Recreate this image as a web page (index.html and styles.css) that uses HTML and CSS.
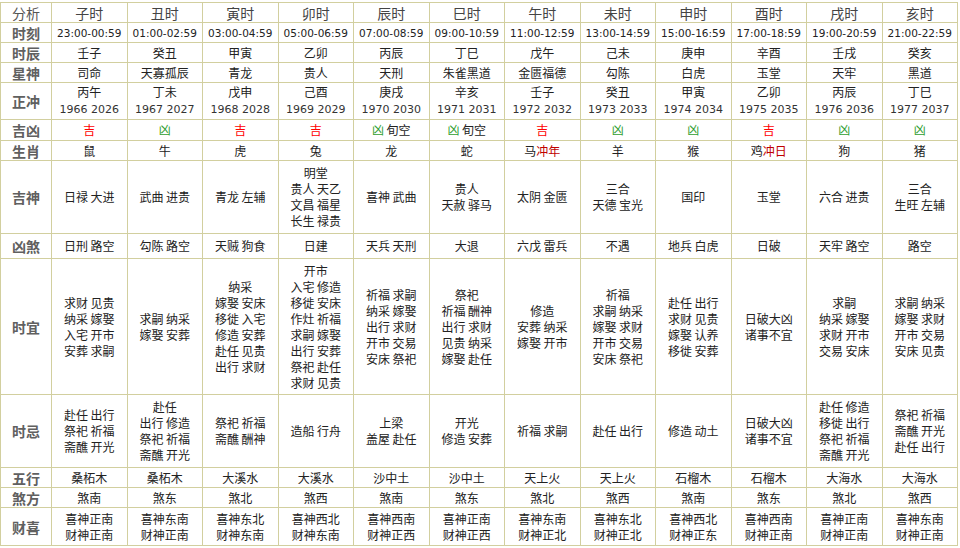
FILE: index.html
```html
<!DOCTYPE html>
<html lang="zh">
<head>
<meta charset="utf-8">
<title>时辰分析</title>
<link rel="stylesheet" href="styles.css">
</head>
<body>
<table class="almanac">
<colgroup>
<col class="c-lbl">
<col span="12" class="c-hr">
</colgroup>
<tbody>
<tr class="r20 head">
<th class="lbl lbl-light">分析</th>
<th>子时</th><th>丑时</th><th>寅时</th><th>卯时</th><th>辰时</th><th>巳时</th><th>午时</th><th>未时</th><th>申时</th><th>酉时</th><th>戌时</th><th>亥时</th>
</tr>
<tr class="r20">
<th class="lbl">时刻</th>
<td class="num">23:00-00:59</td><td class="num">01:00-02:59</td><td class="num">03:00-04:59</td><td class="num">05:00-06:59</td><td class="num">07:00-08:59</td><td class="num">09:00-10:59</td><td class="num">11:00-12:59</td><td class="num">13:00-14:59</td><td class="num">15:00-16:59</td><td class="num">17:00-18:59</td><td class="num">19:00-20:59</td><td class="num">21:00-22:59</td>
</tr>
<tr class="r20">
<th class="lbl">时辰</th>
<td>壬子</td><td>癸丑</td><td>甲寅</td><td>乙卯</td><td>丙辰</td><td>丁巳</td><td>戊午</td><td>己未</td><td>庚申</td><td>辛酉</td><td>壬戌</td><td>癸亥</td>
</tr>
<tr class="r20">
<th class="lbl">星神</th>
<td>司命</td><td>天寡孤辰</td><td>青龙</td><td>贵人</td><td>天刑</td><td>朱雀黑道</td><td>金匮福德</td><td>勾陈</td><td>白虎</td><td>玉堂</td><td>天牢</td><td>黑道</td>
</tr>
<tr class="r37">
<th class="lbl">正冲</th>
<td>丙午<br><span class="num year">1966 2026</span></td>
<td>丁未<br><span class="num year">1967 2027</span></td>
<td>戊申<br><span class="num year">1968 2028</span></td>
<td>己酉<br><span class="num year">1969 2029</span></td>
<td>庚戌<br><span class="num year">1970 2030</span></td>
<td>辛亥<br><span class="num year">1971 2031</span></td>
<td>壬子<br><span class="num year">1972 2032</span></td>
<td>癸丑<br><span class="num year">1973 2033</span></td>
<td>甲寅<br><span class="num year">1974 2034</span></td>
<td>乙卯<br><span class="num year">1975 2035</span></td>
<td>丙辰<br><span class="num year">1976 2036</span></td>
<td>丁巳<br><span class="num year">1977 2037</span></td>
</tr>
<tr class="r21">
<th class="lbl">吉凶</th>
<td><span class="ji">吉</span></td>
<td><span class="xiong">凶</span></td>
<td><span class="ji">吉</span></td>
<td><span class="ji">吉</span></td>
<td><span class="xiong">凶</span> 旬空</td>
<td><span class="xiong">凶</span> 旬空</td>
<td><span class="ji">吉</span></td>
<td><span class="xiong">凶</span></td>
<td><span class="xiong">凶</span></td>
<td><span class="ji">吉</span></td>
<td><span class="xiong">凶</span></td>
<td><span class="xiong">凶</span></td>
</tr>
<tr class="r20">
<th class="lbl">生肖</th>
<td>鼠</td><td>牛</td><td>虎</td><td>兔</td><td>龙</td><td>蛇</td><td>马<span class="chong">冲年</span></td><td>羊</td><td>猴</td><td>鸡<span class="chong">冲日</span></td><td>狗</td><td>猪</td>
</tr>
<tr class="r73">
<th class="lbl">吉神</th>
<td>日禄 大进</td>
<td>武曲 进贵</td>
<td>青龙 左辅</td>
<td>明堂<br>贵人 天乙<br>文昌 福星<br>长生 禄贵</td>
<td>喜神 武曲</td>
<td>贵人<br>天赦 驿马</td>
<td>太阴 金匮</td>
<td>三合<br>天德 宝光</td>
<td>国印</td>
<td>玉堂</td>
<td>六合 进贵</td>
<td>三合<br>生旺 左辅</td>
</tr>
<tr class="r25">
<th class="lbl">凶煞</th>
<td>日刑 路空</td><td>勾陈 路空</td><td>天贼 狗食</td><td>日建</td><td>天兵 天刑</td><td>大退</td><td>六戊 雷兵</td><td>不遇</td><td>地兵 白虎</td><td>日破</td><td>天牢 路空</td><td>路空</td>
</tr>
<tr class="r136">
<th class="lbl">时宜</th>
<td>求财 见贵<br>纳采 嫁娶<br>入宅 开市<br>安葬 求嗣</td>
<td>求嗣 纳采<br>嫁娶 安葬</td>
<td>纳采<br>嫁娶 安床<br>移徙 入宅<br>修造 安葬<br>赴任 见贵<br>出行 求财</td>
<td>开市<br>入宅 修造<br>移徙 安床<br>作灶 祈福<br>求嗣 嫁娶<br>出行 安葬<br>祭祀 赴任<br>求财 见贵</td>
<td>祈福 求嗣<br>纳采 嫁娶<br>出行 求财<br>开市 交易<br>安床 祭祀</td>
<td>祭祀<br>祈福 酬神<br>出行 求财<br>见贵 纳采<br>嫁娶 赴任</td>
<td>修造<br>安葬 纳采<br>嫁娶 开市</td>
<td>祈福<br>求嗣 纳采<br>嫁娶 求财<br>开市 交易<br>安床 祭祀</td>
<td>赴任 出行<br>求财 见贵<br>嫁娶 认养<br>移徙 安葬</td>
<td>日破大凶<br>诸事不宜</td>
<td>求嗣<br>纳采 嫁娶<br>求财 开市<br>交易 安床</td>
<td>求嗣 纳采<br>嫁娶 求财<br>开市 交易<br>安床 见贵</td>
</tr>
<tr class="r73">
<th class="lbl">时忌</th>
<td>赴任 出行<br>祭祀 祈福<br>斋醮 开光</td>
<td>赴任<br>出行 修造<br>祭祀 祈福<br>斋醮 开光</td>
<td>祭祀 祈福<br>斋醮 酬神</td>
<td>造船 行舟</td>
<td>上梁<br>盖屋 赴任</td>
<td>开光<br>修造 安葬</td>
<td>祈福 求嗣</td>
<td>赴任 出行</td>
<td>修造 动土</td>
<td>日破大凶<br>诸事不宜</td>
<td>赴任 修造<br>移徙 出行<br>祭祀 祈福<br>斋醮 开光</td>
<td>祭祀 祈福<br>斋醮 开光<br>赴任 出行</td>
</tr>
<tr class="r20">
<th class="lbl">五行</th>
<td>桑柘木</td><td>桑柘木</td><td>大溪水</td><td>大溪水</td><td>沙中土</td><td>沙中土</td><td>天上火</td><td>天上火</td><td>石榴木</td><td>石榴木</td><td>大海水</td><td>大海水</td>
</tr>
<tr class="r20">
<th class="lbl">煞方</th>
<td>煞南</td><td>煞东</td><td>煞北</td><td>煞西</td><td>煞南</td><td>煞东</td><td>煞北</td><td>煞西</td><td>煞南</td><td>煞东</td><td>煞北</td><td>煞西</td>
</tr>
<tr class="r38">
<th class="lbl">财喜</th>
<td>喜神正南<br>财神正南</td>
<td>喜神东南<br>财神正南</td>
<td>喜神东北<br>财神东南</td>
<td>喜神西北<br>财神东南</td>
<td>喜神西南<br>财神正西</td>
<td>喜神正南<br>财神正西</td>
<td>喜神东南<br>财神正北</td>
<td>喜神东北<br>财神正北</td>
<td>喜神西北<br>财神正东</td>
<td>喜神西南<br>财神正南</td>
<td>喜神正南<br>财神正南</td>
<td>喜神东南<br>财神正南</td>
</tr>
</tbody>
</table>
</body>
</html>
```

FILE: styles.css
```css
html, body {
  margin: 0;
  padding: 0;
  background: #ffffff;
}

body {
  padding-top: 2px;
  font-family: "Noto Sans CJK SC", "DejaVu Sans", sans-serif;
  color: #333333;
}

.almanac {
  border-collapse: collapse;
  table-layout: fixed;
  width: 957px;
  font-size: 12px;
  line-height: 16px;
}

.c-lbl { width: 51px; }
.c-hr { width: 75.5px; }

.almanac th,
.almanac td {
  border: 1px solid #d2cf9f;
  padding: 0;
  text-align: center;
  vertical-align: middle;
  font-weight: normal;
  white-space: nowrap;
  overflow: hidden;
}

.almanac td { color: #222222; }

.head th {
  font-size: 14px;
  color: #444444;
}

.lbl {
  font-size: 14px;
  font-weight: bold !important;
  color: #606060;
}

.lbl.lbl-light {
  font-weight: normal !important;
  color: #555555;
}

.num {
  font-family: "DejaVu Sans", sans-serif;
  font-size: 10.5px;
  color: #333333;
}

.num.year {
  font-size: 11px;
}

.ji { color: #ff0000; }
.xiong { color: #2f9e2f; }
.chong { color: #c00000; }

.r20 { height: 20px; }
.r21 { height: 21px; }
.r25 { height: 25px; }
.r37 { height: 37px; }
.r38 { height: 38px; }
.r73 { height: 73px; }
.r136 { height: 136px; }
```
